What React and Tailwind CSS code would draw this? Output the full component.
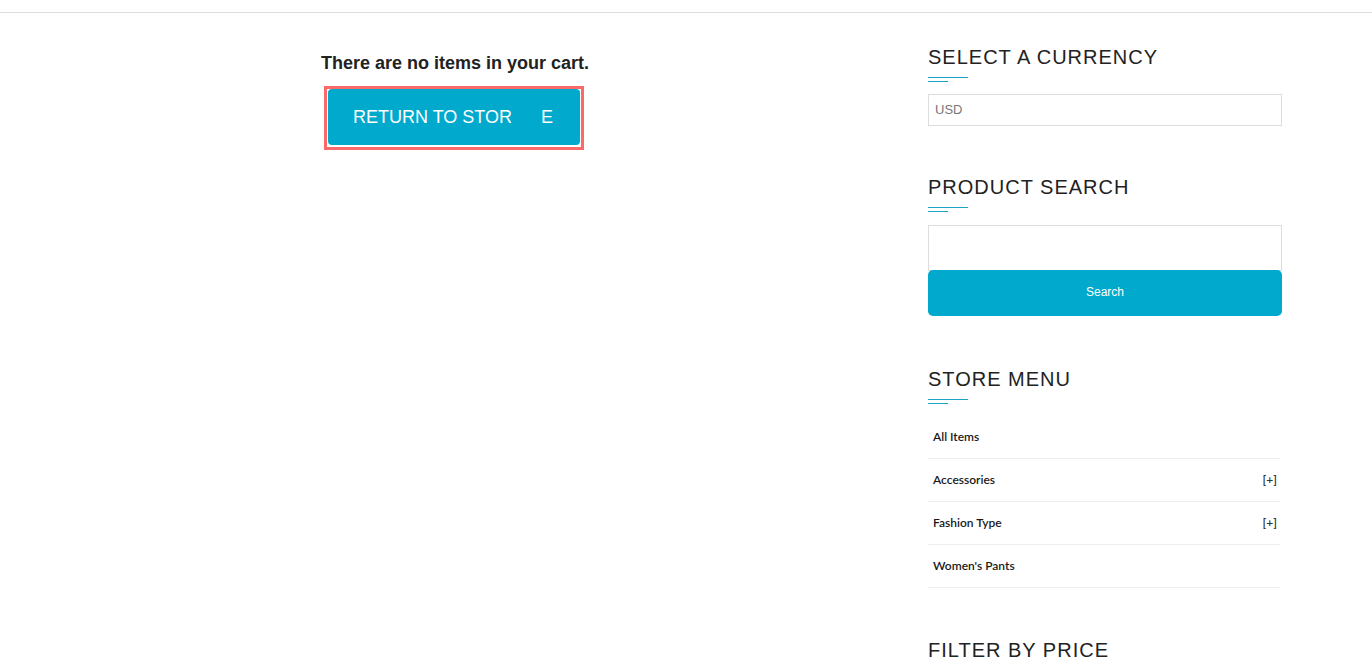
export default function App() {
  const menu = [
    { name: 'All Items', more: false },
    { name: 'Accessories', more: true },
    { name: 'Fashion Type', more: true },
    { name: "Women's Pants", more: false },
  ];

  const Heading = ({ children }) => (
    <div>
      <h3 className="text-[20px] leading-[24px] tracking-[1px] text-[#222] font-normal" style={{ fontFamily: '"Liberation Sans", Arial, sans-serif' }}>
        {children}
      </h3>
      <div className="mt-[8px] w-10 h-px bg-[#1aa3c4]" />
      <div className="mt-[3px] w-5 h-px bg-[#1aa3c4]" />
    </div>
  );

  return (
    <div className="w-[1372px] h-[665px] overflow-hidden bg-white" style={{ fontFamily: '"Liberation Sans", Arial, sans-serif' }}>
      <div className="h-3" />
      <div className="h-px bg-[#dddddd]" />

      <div className="flex">
        {/* Cart content */}
        <div className="pl-[321px] w-[928px] pt-[39px]">
          <p className="text-[18px] leading-[23px] font-bold text-[#222]">There are no items in your cart.</p>
          <div className="mt-[11px] ml-[3px] inline-flex border-[3px] border-[#fb6a6a] pl-px pr-px pb-[2px]">
            <button className="w-[252px] h-[56px] rounded-[4px] bg-[#01a9cc] text-white text-[18px] flex items-center pl-[25px]">
              <span>RETURN TO STOR</span>
              <span className="ml-[29px]">E</span>
            </button>
          </div>
        </div>

        {/* Sidebar */}
        <aside className="w-[354px] pt-[32px]">
          <Heading>SELECT A CURRENCY</Heading>
          <div className="mt-[12px] h-[32px] border border-[#dddddd] flex items-center pl-[6px] text-[13px] text-[#777]">
            USD
          </div>

          <div className="mt-[49px]">
            <Heading>PRODUCT SEARCH</Heading>
          </div>
          <div className="mt-[13px] h-[46px] border border-[#dddddd]" />
          <button className="w-full h-[46px] -mt-px rounded-[5px] bg-[#01a9cc] text-white text-[12px] flex items-center justify-center pb-[2px]">
            Search
          </button>

          <div className="mt-[51px]">
            <Heading>STORE MENU</Heading>
          </div>
          <ul className="mt-[12px] w-[352px]" style={{ fontFamily: 'Lato, "Open Sans", sans-serif' }}>
            {menu.map((item) => (
              <li key={item.name} className="h-[43px] border-b border-[#eeeeee] flex items-center justify-between pl-[5px] pr-[3px] text-[12px] font-semibold text-[#1a1a1a]">
                <span>{item.name}</span>
                {item.more && <span className="text-[#333]">[+]</span>}
              </li>
            ))}
          </ul>

          <div className="mt-[50px]">
            <Heading>FILTER BY PRICE</Heading>
          </div>
        </aside>
      </div>
    </div>
  );
}
